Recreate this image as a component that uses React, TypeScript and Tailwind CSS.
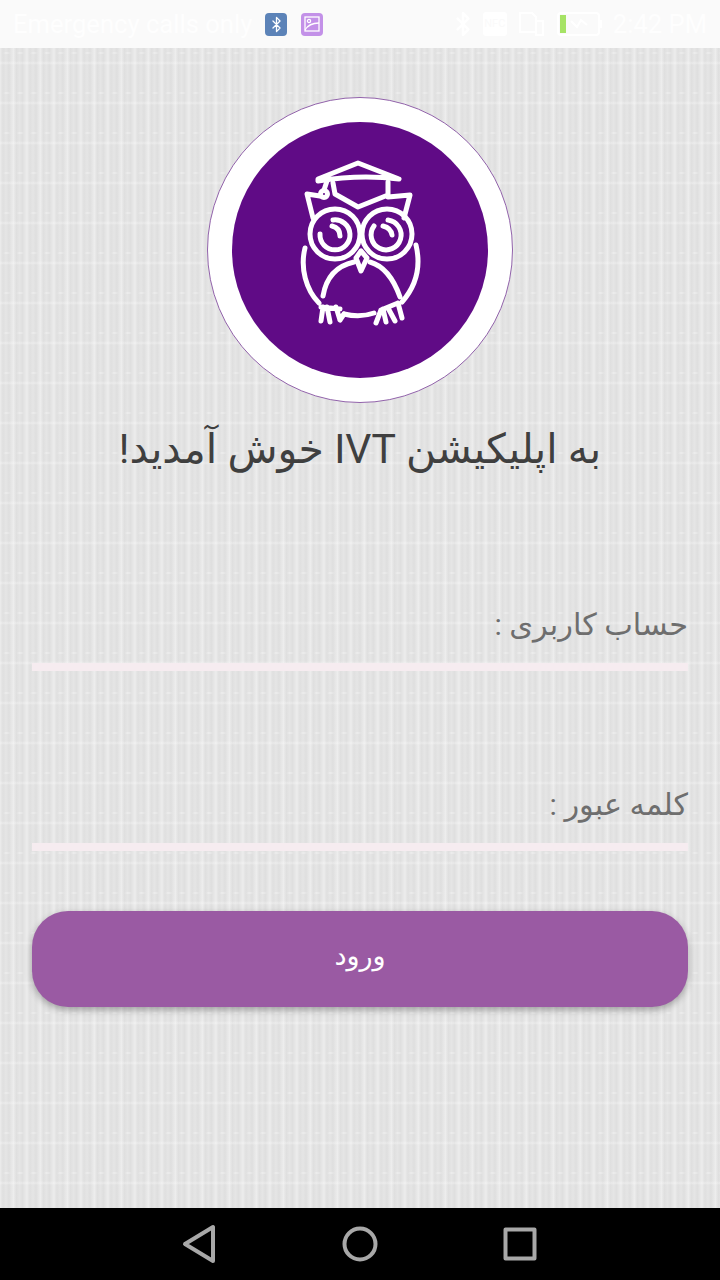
import { Bluetooth } from "lucide-react";

const OwlLogo = () => {
  return (
    <svg width="160" height="190" viewBox="0 5 160 190" fill="none" stroke="#fff" strokeWidth="5" strokeLinecap="round" strokeLinejoin="round">
      {/* cap */}
      <path d="M38 29 L78 13 L119 29 Q80 24 38 31 Z" />
      <path d="M53 33 L55 44 L78 57 L108 45 L108 32" />
      <circle cx="44" cy="44" r="3.5" />
      <path d="M47 31 L44 40" />
      {/* head */}
      <path d="M40 46 L27 44 L33 68" />
      <path d="M108 47 L130 45 L124 68" />
      {/* eyes */}
      <circle cx="55" cy="84" r="25" />
      <circle cx="107" cy="84" r="25" />
      <path d="M53 70 A15 15 0 1 1 40 84" />
      <path d="M94 76 A15 15 0 1 0 108 70" />
      <path d="M52 76 Q60 78 60 86" />
      <path d="M103 76 Q111 78 112 85" />
      {/* beak */}
      <path d="M81 101 L76 108 L81 121 L87 108 Z" />
      {/* body */}
      <path d="M25 98 C20 118 26 140 39 153" />
      <path d="M136 95 C141 116 136 136 122 152" />
      <path d="M43 146 C46 128 56 116 74 112" />
      <path d="M90 112 C104 116 114 130 120 147" />
      <path d="M64 164 Q80 168 94 163" />
      {/* claws */}
      <path d="M43 157 L41 171 M47 157 L50 172 M56 157 L60 170 M41 157 L60 159 M64 164 L60 170" />
      <path d="M101 160 L96 173 M103 159 L106 172 M108 158 L115 171 M101 160 L118 153 M118 153 L122 168" />
    </svg>
  );
};

const StatusBar = () => {
  return (
    <div className="flex h-12 items-center bg-[#fafafa] pl-[13px] pr-[13px] font-['Roboto',sans-serif] text-[25.6px] text-[#fefefe]">
      <span className="w-[252px] whitespace-nowrap">Emergency calls only</span>
      <div className="flex h-[23px] w-[22px] items-center justify-center rounded-[4px] bg-[#5c83b8]">
        <Bluetooth size={17} color="#fff" strokeWidth={1.8} />
      </div>
      <div className="ml-[14px] flex h-[23px] w-[22px] items-center justify-center rounded-[4px] bg-[#c391e8]">
        <svg width="16" height="16" viewBox="0 0 16 16" fill="none" stroke="#fff" strokeWidth="1.3">
          <rect x="1" y="1" width="14" height="14" />
          <circle cx="5" cy="5" r="1.6" />
          <path d="M1 14 Q5 7 15 7" />
        </svg>
      </div>
      <div className="ml-auto flex items-center">
        <Bluetooth size={26} color="#fff" strokeWidth={2.4} />
        <div className="ml-[7px] flex h-[24px] w-[24px] items-center justify-center overflow-hidden rounded-[3px] bg-white text-[11px] leading-none text-[#fafafa]">
          NFC
        </div>
        <svg className="ml-[12px]" width="25" height="25" viewBox="0 0 25 25" fill="none" stroke="#fff" strokeWidth="2">
          <path d="M1 2 H13 L17 6 V21 H1 Z" />
          <path d="M17 10 H24 V24 H17 Z" />
        </svg>
        <svg className="ml-[13px]" width="46" height="24" viewBox="0 0 46 24" fill="none">
          <rect x="1" y="1" width="41" height="22" rx="3" stroke="#fff" strokeWidth="2" />
          <rect x="3" y="3" width="6" height="18" fill="#a6e365" />
          <path d="M14 9 L20 15 L24 8 L30 13" stroke="#fff" strokeWidth="2" />
          <rect x="43" y="8" width="2" height="8" fill="#fff" />
        </svg>
        <span className="ml-[10px] whitespace-nowrap">2:42 PM</span>
      </div>
    </div>
  );
};

const Field = ({ label }: { label: string }) => {
  return (
    <div className="flex flex-col">
      <div className="h-[57px] text-right text-[30.4px] leading-[55px] text-[#6e6e6e]">{label}</div>
      <div className="mt-[9px] h-2 bg-[#f6ecf0]" />
    </div>
  );
};

const NavBar = () => {
  return (
    <div className="flex h-[72px] items-center justify-center gap-[120px] bg-black">
      <svg width="40" height="40" viewBox="0 0 40 40" fill="none" stroke="#a8a8a8" strokeWidth="4" strokeLinejoin="round">
        <path d="M5 20 L33 3 V37 Z" />
      </svg>
      <svg width="40" height="40" viewBox="0 0 40 40" fill="none" stroke="#a8a8a8" strokeWidth="4">
        <circle cx="20" cy="20" r="15.5" />
      </svg>
      <svg width="40" height="40" viewBox="0 0 40 40" fill="none" stroke="#a8a8a8" strokeWidth="4" strokeLinejoin="round">
        <rect x="5.5" y="5.5" width="29" height="29" />
      </svg>
    </div>
  );
};

const App = () => {
  return (
    <div dir="ltr" className="flex h-[1280px] w-[720px] flex-col overflow-hidden font-['Roboto','DejaVu_Sans',sans-serif]">
      <StatusBar />
      <div className="flex h-[1160px] flex-col bg-[#e3e3e3] bg-[image:radial-gradient(ellipse_4px_1.6px_at_50%_5px,rgba(255,255,255,0.4),transparent),linear-gradient(0deg,transparent_23px,rgba(255,255,255,0.3)_25px,transparent_27px),repeating-linear-gradient(90deg,rgba(255,255,255,0.35)_0,rgba(255,255,255,0.08)_1.5px,rgba(0,0,0,0.015)_3px,rgba(255,255,255,0.08)_6px,rgba(0,0,0,0.02)_9px,rgba(255,255,255,0.08)_11px,rgba(255,255,255,0.35)_13.5px)] bg-[size:13.5px_40px,100%_40px,100%_100%] px-8 pt-[49px]">
        <div className="mx-auto flex h-[306px] w-[306px] items-center justify-center rounded-full border-[1.5px] border-[#9263ab] bg-white">
          <div className="flex h-[256px] w-[256px] items-center justify-center rounded-full bg-[#600b86]">
            <OwlLogo />
          </div>
        </div>
        <h1 dir="rtl" className="mt-[21px] whitespace-nowrap text-center text-[41px] font-normal leading-[50px] text-[#3f3f3f]">
          به اپلیکیشن IVT خوش آمدید!
        </h1>
        <div dir="rtl" className="mt-[123px]">
          <Field label="حساب کاربری :" />
        </div>
        <div dir="rtl" className="mt-[106px]">
          <Field label="کلمه عبور :" />
        </div>
        <button className="mt-[60px] h-24 w-full rounded-[36px] bg-[#9a5aa3] pb-1.5 text-[27px] text-white shadow-[0_3px_7px_rgba(0,0,0,0.3)]">
          ورود
        </button>
      </div>
      <NavBar />
    </div>
  );
};

export default App;
